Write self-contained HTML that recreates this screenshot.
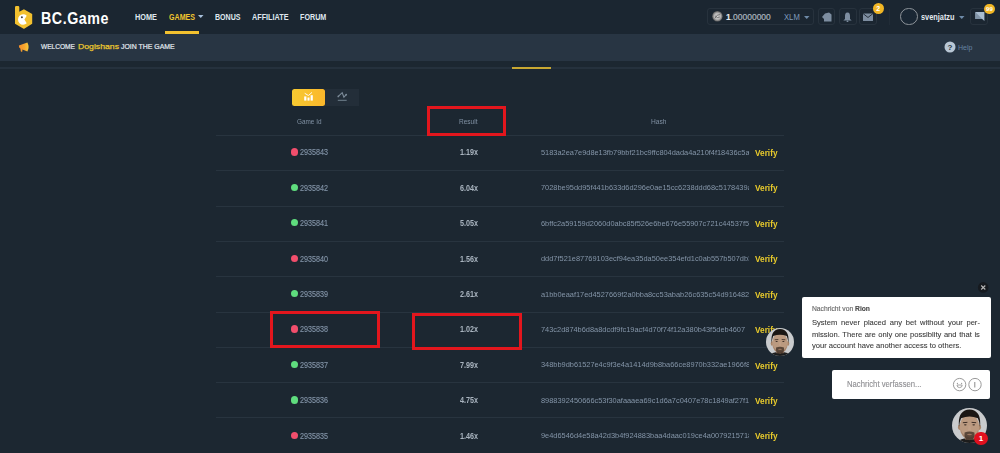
<!DOCTYPE html>
<html><head><meta charset="utf-8">
<style>
*{margin:0;padding:0;box-sizing:border-box}
html,body{width:1000px;height:453px;overflow:hidden;background:#1c2731;font-family:"Liberation Sans",sans-serif}
.a{position:absolute}
.tx{white-space:nowrap}
#hdr{left:0;top:0;width:1000px;height:34px;background:#1b2631}
#wel{left:0;top:34px;width:1000px;height:27px;background:#283543}
#tabline{left:0;top:67px;width:1000px;height:2px;background:#25313d}
#tabsel{left:512.4px;top:67px;width:38.6px;height:2px;background:#c9a832}
.ul{left:165px;top:31px;width:34px;height:3px;background:#f3c12f}
.btn{top:8.2px;height:17.3px;border:1px solid #27323d;border-radius:3px}
.badge{width:11px;height:11px;border-radius:50%;background:#f1b624;color:#fff;font-size:7px;font-weight:bold;text-align:center;line-height:11px}
.hl{left:216px;width:568px;height:1px;background:#28343f}
.dot{width:7px;height:7px;border-radius:50%}
.hashw{left:541px;width:207.5px;overflow:hidden}
.rbox{border:3px solid #e3161d}
.chatbox{background:#fff;border-radius:2px}

</style></head><body><div id="wrap" style="position:absolute;left:0;top:0;width:1000px;height:453px;filter:blur(0.3px)">
<div id="hdr" class="a"></div>
<div id="wel" class="a"></div>
<div id="tabline" class="a"></div>
<div id="tabsel" class="a"></div>
<svg class="a" style="left:10px;top:3px" width="30" height="30" viewBox="0 0 30 30">
<path d="M5 4.2 Q5 3 6.2 3 L8.1 3 Q9.3 3 9.3 4.2 L9.3 8.8 L13.9 6.3 L22.2 11 L22.2 20.8 L14.6 25.5 Q13.9 25.9 13.2 25.5 L5 20.8 Z" fill="#f3c12f"/>
<path d="M14.4 16.5 L16.75 12.7 A5.2 5.2 0 1 0 16.75 20.3 Z" fill="#fff"/>
<circle cx="11.9" cy="14.3" r="0.95" fill="#3a3a3a"/>
</svg>
<svg class="a" style="left:198px;top:15.4px" width="6" height="4"><path d="M0 0 L5.5 0 L2.75 3Z" fill="#a8c0dc"/></svg>
<div class="a ul"></div>
<!-- right -->
<div class="a btn" style="left:707.2px;width:107.3px"></div>
<svg class="a" style="left:712px;top:11px" width="11" height="11" viewBox="0 0 11 11"><defs><radialGradient id="cg"><stop offset="0" stop-color="#d8d8d8"/><stop offset="0.6" stop-color="#b5b5b5"/><stop offset="1" stop-color="#5d5d5d"/></radialGradient></defs><circle cx="5.4" cy="5.3" r="5.2" fill="url(#cg)"/><path d="M3 7.2 Q5 3 8 3.6 M3.2 5 Q5.5 7.5 7.8 6" stroke="#6a6a6a" stroke-width="0.9" fill="none"/></svg>
<svg class="a" style="left:803.5px;top:15.5px" width="6" height="4"><path d="M0 0 L5.5 0 L2.75 3Z" fill="#6e8aa8"/></svg>
<div class="a btn" style="left:818.2px;width:16.8px"></div>
<div class="a btn" style="left:838.6px;width:18px"></div>
<div class="a btn" style="left:859.4px;width:17.6px"></div>
<svg class="a" style="left:821px;top:12px" width="11" height="10" viewBox="0 0 11 10"><path d="M1 5 L4 1.5 L8 0.5 L10.5 2.5 L10.5 9.5 L3 9.5 L3 7 Z" fill="#7d8da0"/></svg>
<svg class="a" style="left:843px;top:11.8px" width="9" height="10.5" viewBox="0 0 9 10.5"><path d="M4.5 0.5 C2.3 0.5 2 2.5 2 4.5 L2 7 L0.3 8.5 L8.7 8.5 L7 7 L7 4.5 C7 2.5 6.7 0.5 4.5 0.5Z" fill="#7d8da0"/><circle cx="4.5" cy="9.5" r="0.9" fill="#7d8da0"/></svg>
<svg class="a" style="left:863px;top:13px" width="10" height="8" viewBox="0 0 10 8"><rect x="0" y="0.5" width="10" height="7.5" rx="0.5" fill="#7d8da0"/><path d="M0 0.5 L5 4.5 L10 0.5" stroke="#1b2530" stroke-width="0.9" fill="none"/></svg>
<div class="a badge" style="left:872.7px;top:3.1px">2</div>
<div class="a" style="left:889px;top:9px;width:1px;height:16px;background:#212c37"></div>
<div class="a" style="left:900.2px;top:7.8px;width:17.6px;height:17.6px;border-radius:50%;border:1px solid #8f959b;background:#1a2734"></div>
<svg class="a" style="left:959px;top:15.6px" width="6" height="4"><path d="M0 0 L5.5 0 L2.75 3Z" fill="#6e8aa8"/></svg>
<div class="a btn" style="left:970.4px;width:18.1px"></div>
<svg class="a" style="left:974.8px;top:12.2px" width="10" height="10" viewBox="0 0 10 10"><path d="M0.4 0.1 L9.4 0.1 L9.4 9 L7.2 7 L0.4 7Z" fill="#a9bccf"/><path d="M0.4 0.1 L0.4 7 L7.2 7Z" fill="#8194a8"/></svg>
<div class="a badge" style="left:984.2px;top:3.5px;width:10.5px;height:10.5px;line-height:10.5px;font-size:6px">99</div>
<!-- welcome -->
<svg class="a" style="left:12px;top:37px" width="24" height="20" viewBox="0 0 24 20"><defs><linearGradient id="mg" x1="0" x2="1" y1="0" y2="0"><stop offset="0" stop-color="#f58e2a"/><stop offset="0.55" stop-color="#f7a52f"/><stop offset="1" stop-color="#f9cb3b"/></linearGradient></defs><path d="M6.9 8.6 Q6.7 10.9 8.3 11.6 L8.9 14.4 Q9.4 15 10.3 14.5 L10.4 12.4 L15.4 14.6 Q17.8 10 15.4 5.4 Z" fill="url(#mg)"/></svg>
<svg class="a" style="left:943.5px;top:41px" width="12" height="12" viewBox="0 0 12 12"><circle cx="6" cy="6" r="5.5" fill="#b9c7d5"/><text x="6" y="8.9" font-size="8" font-weight="bold" text-anchor="middle" fill="#283441" font-family="Liberation Sans">?</text></svg>
<!-- toggle -->
<div class="a" style="left:292.2px;top:88.5px;width:33.2px;height:17.1px;border-radius:2.5px;background:linear-gradient(90deg,#f7ca31,#fbb72b)"></div>
<div class="a" style="left:325.4px;top:88.5px;width:33.6px;height:17.1px;background:#232e39"></div>
<svg class="a" style="left:298px;top:86px" width="56" height="22" viewBox="0 0 56 22">
<rect x="6.2" y="10.4" width="2.2" height="4.2" fill="#fff"/><rect x="9.5" y="11.5" width="2" height="3.1" fill="#fff"/><rect x="12.6" y="9.2" width="2.2" height="5.4" fill="#fff"/>
<path d="M6.7 7.3 L10.4 9.5 L14 6.4" stroke="#fff" stroke-width="0.9" fill="none"/>
<path d="M40.3 10.4 L44.2 6.7 L45.9 11.2 L48.2 8.7" stroke="#7c8b99" stroke-width="1.1" fill="none"/>
<circle cx="40.3" cy="10.4" r="0.9" fill="#7c8b99"/><circle cx="48.2" cy="8.7" r="0.9" fill="#7c8b99"/>
<path d="M39.8 14.3 L48.7 14.3" stroke="#7c8b99" stroke-width="0.9"/>
</svg>

<div class="a hl" style="top:135.0px"></div>
<div class="a dot" style="left:290.6px;top:148.3px;width:7.4px;height:7.4px;background:#f14e6c"></div>
<div class="a hashw" style="top:146.7px;height:12px"><span class="a" style="left:0;top:2.23px;font-size:8px;line-height:8px;color:#8495a8;white-space:nowrap;transform:scaleX(0.925);transform-origin:0 0">5183a2ea7e9d8e13fb79bbf21bc9ffc804dada4a210f4f18436c5a9</span></div>
<div class="a hl" style="top:170.0px"></div>
<div class="a dot" style="left:290.6px;top:183.7px;width:7.4px;height:7.4px;background:#5fdd7e"></div>
<div class="a hashw" style="top:182.1px;height:12px"><span class="a" style="left:0;top:2.23px;font-size:8px;line-height:8px;color:#8495a8;white-space:nowrap;transform:scaleX(0.925);transform-origin:0 0">7028be95dd95f441b633d6d296e0ae15cc6238ddd68c5178439a1</span></div>
<div class="a hl" style="top:206.0px"></div>
<div class="a dot" style="left:290.6px;top:219.1px;width:7.4px;height:7.4px;background:#5fdd7e"></div>
<div class="a hashw" style="top:217.5px;height:12px"><span class="a" style="left:0;top:2.23px;font-size:8px;line-height:8px;color:#8495a8;white-space:nowrap;transform:scaleX(0.925);transform-origin:0 0">6bffc2a59159d2060d0abc85f526e6be676e55907c721c44537f5e</span></div>
<div class="a hl" style="top:241.0px"></div>
<div class="a dot" style="left:290.6px;top:254.5px;width:7.4px;height:7.4px;background:#f14e6c"></div>
<div class="a hashw" style="top:252.9px;height:12px"><span class="a" style="left:0;top:2.23px;font-size:8px;line-height:8px;color:#8495a8;white-space:nowrap;transform:scaleX(0.925);transform-origin:0 0">ddd7f521e87769103ecf94ea35da50ee354efd1c0ab557b507db3</span></div>
<div class="a hl" style="top:276.0px"></div>
<div class="a dot" style="left:290.6px;top:289.9px;width:7.4px;height:7.4px;background:#5fdd7e"></div>
<div class="a hashw" style="top:288.3px;height:12px"><span class="a" style="left:0;top:2.23px;font-size:8px;line-height:8px;color:#8495a8;white-space:nowrap;transform:scaleX(0.925);transform-origin:0 0">a1bb0eaaf17ed4527669f2a0bba8cc53abab26c635c54d916482</span></div>
<div class="a hl" style="top:312.0px"></div>
<div class="a dot" style="left:290.6px;top:325.3px;width:7.4px;height:7.4px;background:#f14e6c"></div>
<div class="a hashw" style="top:323.8px;height:12px"><span class="a" style="left:0;top:2.23px;font-size:8px;line-height:8px;color:#8495a8;white-space:nowrap;transform:scaleX(0.925);transform-origin:0 0">743c2d874b6d8a8dcdf9fc19acf4d70f74f12a380b43f5deb4607</span></div>
<div class="a hl" style="top:347.0px"></div>
<div class="a dot" style="left:290.6px;top:360.8px;width:7.4px;height:7.4px;background:#5fdd7e"></div>
<div class="a hashw" style="top:359.2px;height:12px"><span class="a" style="left:0;top:2.23px;font-size:8px;line-height:8px;color:#8495a8;white-space:nowrap;transform:scaleX(0.925);transform-origin:0 0">348bb9db61527e4c9f3e4a1414d9b8ba66ce8970b332ae1966f8e</span></div>
<div class="a hl" style="top:382.0px"></div>
<div class="a dot" style="left:290.6px;top:396.2px;width:7.4px;height:7.4px;background:#5fdd7e"></div>
<div class="a hashw" style="top:394.6px;height:12px"><span class="a" style="left:0;top:2.23px;font-size:8px;line-height:8px;color:#8495a8;white-space:nowrap;transform:scaleX(0.925);transform-origin:0 0">8988392450666c53f30afaaaea69c1d6a7c0407e78c1849af27f1a</span></div>
<div class="a hl" style="top:417.0px"></div>
<div class="a dot" style="left:290.6px;top:431.6px;width:7.4px;height:7.4px;background:#f14e6c"></div>
<div class="a hashw" style="top:430.0px;height:12px"><span class="a" style="left:0;top:2.23px;font-size:8px;line-height:8px;color:#8495a8;white-space:nowrap;transform:scaleX(0.925);transform-origin:0 0">9e4d6546d4e58a42d3b4f924883baa4daac019ce4a0079215718c</span></div>
<svg class="a" style="left:977px;top:281px" width="13" height="13" viewBox="0 0 13 13"><circle cx="6.2" cy="6.4" r="5.3" fill="#161a1f"/><path d="M4.2 4.5 L8.3 8.5 M8.3 4.5 L4.2 8.5" stroke="#b5b5b5" stroke-width="1.1"/></svg>
<div class="a chatbox" style="left:801.5px;top:296.9px;width:189px;height:61px"></div>
<div class="a chatbox" style="left:831.7px;top:369.9px;width:158.7px;height:29.5px"></div>
<svg class="a" style="left:950px;top:375px" width="36" height="20" viewBox="0 0 36 20">
<circle cx="9.6" cy="9.6" r="6.2" fill="none" stroke="#9a9a9a" stroke-width="1"/>
<circle cx="7.4" cy="8.4" r="0.6" fill="#9a9a9a"/><circle cx="11.6" cy="8.4" r="0.6" fill="#9a9a9a"/>
<path d="M7 10 L12.2 10 A2.6 2.6 0 0 1 7 10Z" fill="none" stroke="#9a9a9a" stroke-width="0.9"/>
<circle cx="25" cy="9.6" r="6.2" fill="none" stroke="#9a9a9a" stroke-width="1"/>
<path d="M24.8 7 L24.8 12.5" stroke="#8a8a8a" stroke-width="1"/>
</svg>
<div class="a" style="left:811.9px;top:317.3px;width:168.1px;font-size:7.6px;line-height:11.2px;color:#383838;-webkit-text-stroke:0.08px #383838">
<div style="text-align:justify;text-align-last:justify;white-space:nowrap;display:flex;justify-content:space-between"><span>System</span><span>never</span><span>placed</span><span>any</span><span>bet</span><span>without</span><span>your</span><span>per-</span></div>
<div style="display:flex;justify-content:space-between;white-space:nowrap"><span>mission.</span><span>There</span><span>are</span><span>only</span><span>one</span><span>possiblity</span><span>and</span><span>that</span><span>is</span></div>
<div style="white-space:nowrap">your account have another access to others.</div>
</div>

<div id="t0" class="a tx" style="left:40.5px;top:10.73px;font-size:15.8px;line-height:15.8px;font-weight:bold;color:#fff;letter-spacing:0.6px;transform:scaleX(0.9029);transform-origin:0 0">BC.Game</div>
<div id="t1" class="a tx" style="left:135px;top:13.00px;font-size:8.5px;line-height:8.5px;font-weight:bold;color:#dfe6ee;transform:scaleX(0.8627);transform-origin:0 0">HOME</div>
<div id="t2" class="a tx" style="left:169px;top:13.00px;font-size:8.5px;line-height:8.5px;font-weight:bold;color:#f0c52f;transform:scaleX(0.8341);transform-origin:0 0">GAMES</div>
<div id="t3" class="a tx" style="left:215px;top:13.00px;font-size:8.5px;line-height:8.5px;font-weight:bold;color:#dfe6ee;transform:scaleX(0.8305);transform-origin:0 0">BONUS</div>
<div id="t4" class="a tx" style="left:252px;top:13.00px;font-size:8.5px;line-height:8.5px;font-weight:bold;color:#dfe6ee;transform:scaleX(0.8526);transform-origin:0 0">AFFILIATE</div>
<div id="t5" class="a tx" style="left:300px;top:13.00px;font-size:8.5px;line-height:8.5px;font-weight:bold;color:#dfe6ee;transform:scaleX(0.8437);transform-origin:0 0">FORUM</div>
<div id="t6" class="a tx" style="left:725.8px;top:13.00px;font-size:8.5px;line-height:8.5px;color:#aab4be;-webkit-text-stroke:0.2px #aab4be;transform:scaleX(0.9973);transform-origin:0 0"><b style="color:#eef2f6">1</b>.00000000</div>
<div id="t7" class="a tx" style="left:784px;top:13.00px;font-size:8.5px;line-height:8.5px;color:#7f9bba;transform:scaleX(0.9037);transform-origin:0 0">XLM</div>
<div id="t8" class="a tx" style="left:920.5px;top:13.10px;font-size:8.5px;line-height:8.5px;font-weight:bold;color:#e3e9ef;transform:scaleX(0.8645);transform-origin:0 0">svenjatzu</div>
<div id="t9" class="a tx" style="left:41px;top:43.45px;font-size:7.5px;line-height:7.5px;color:#e3e9ef;-webkit-text-stroke:0.2px #e3e9ef;transform:scaleX(0.8771);transform-origin:0 0">WELCOME</div>
<div id="t10" class="a tx" style="left:77.7px;top:43.20px;font-size:7.8px;line-height:7.8px;color:#eac52f;-webkit-text-stroke:0.25px #eac52f;transform:scaleX(1.1128);transform-origin:0 0">Dogishans</div>
<div id="t11" class="a tx" style="left:120.8px;top:43.45px;font-size:7.5px;line-height:7.5px;color:#e3e9ef;-webkit-text-stroke:0.2px #e3e9ef;transform:scaleX(0.9226);transform-origin:0 0">JOIN THE GAME</div>
<div id="t12" class="a tx" style="left:958px;top:43.73px;font-size:8px;line-height:8px;color:#6583a2;transform:scaleX(0.8813);transform-origin:0 0">Help</div>
<div id="t13" class="a tx" style="left:297px;top:118.47px;font-size:7px;line-height:7px;color:#8091a3;transform:scaleX(0.9122);transform-origin:0 0">Game Id</div>
<div id="t14" class="a tx" style="left:459px;top:118.47px;font-size:7px;line-height:7px;color:#8091a3;transform:scaleX(0.9323);transform-origin:0 0">Result</div>
<div id="t15" class="a tx" style="left:651px;top:118.47px;font-size:7px;line-height:7px;color:#8091a3;transform:scaleX(0.9484);transform-origin:0 0">Hash</div>
<div id="t16" class="a tx" style="left:299.7px;top:148.34px;font-size:8.7px;line-height:8.7px;color:#8092a5;-webkit-text-stroke:0.15px #8092a5;transform:scaleX(0.8277);transform-origin:0 0">2935843</div>
<div id="t17" class="a tx" style="left:459.9px;top:148.34px;font-size:8.7px;line-height:8.7px;font-weight:bold;color:#a9b4bf;transform:scaleX(0.8276);transform-origin:0 0">1.19x</div>
<div id="t18" class="a tx" style="left:754.9px;top:149.08px;font-size:9px;line-height:9px;font-weight:bold;color:#e9cb2c;transform:scaleX(0.9172);transform-origin:0 0">Verify</div>
<div id="t19" class="a tx" style="left:299.7px;top:183.75px;font-size:8.7px;line-height:8.7px;color:#8092a5;-webkit-text-stroke:0.15px #8092a5;transform:scaleX(0.8277);transform-origin:0 0">2935842</div>
<div id="t20" class="a tx" style="left:459.9px;top:183.75px;font-size:8.7px;line-height:8.7px;font-weight:bold;color:#a9b4bf;transform:scaleX(0.8276);transform-origin:0 0">6.04x</div>
<div id="t21" class="a tx" style="left:754.9px;top:184.49px;font-size:9px;line-height:9px;font-weight:bold;color:#e9cb2c;transform:scaleX(0.9172);transform-origin:0 0">Verify</div>
<div id="t22" class="a tx" style="left:299.7px;top:219.16px;font-size:8.7px;line-height:8.7px;color:#8092a5;-webkit-text-stroke:0.15px #8092a5;transform:scaleX(0.8277);transform-origin:0 0">2935841</div>
<div id="t23" class="a tx" style="left:459.9px;top:219.16px;font-size:8.7px;line-height:8.7px;font-weight:bold;color:#a9b4bf;transform:scaleX(0.8276);transform-origin:0 0">5.05x</div>
<div id="t24" class="a tx" style="left:754.9px;top:219.90px;font-size:9px;line-height:9px;font-weight:bold;color:#e9cb2c;transform:scaleX(0.9172);transform-origin:0 0">Verify</div>
<div id="t25" class="a tx" style="left:299.7px;top:254.57px;font-size:8.7px;line-height:8.7px;color:#8092a5;-webkit-text-stroke:0.15px #8092a5;transform:scaleX(0.8277);transform-origin:0 0">2935840</div>
<div id="t26" class="a tx" style="left:459.9px;top:254.57px;font-size:8.7px;line-height:8.7px;font-weight:bold;color:#a9b4bf;transform:scaleX(0.8276);transform-origin:0 0">1.56x</div>
<div id="t27" class="a tx" style="left:754.9px;top:255.31px;font-size:9px;line-height:9px;font-weight:bold;color:#e9cb2c;transform:scaleX(0.9172);transform-origin:0 0">Verify</div>
<div id="t28" class="a tx" style="left:299.7px;top:289.98px;font-size:8.7px;line-height:8.7px;color:#8092a5;-webkit-text-stroke:0.15px #8092a5;transform:scaleX(0.8277);transform-origin:0 0">2935839</div>
<div id="t29" class="a tx" style="left:459.9px;top:289.98px;font-size:8.7px;line-height:8.7px;font-weight:bold;color:#a9b4bf;transform:scaleX(0.8276);transform-origin:0 0">2.61x</div>
<div id="t30" class="a tx" style="left:754.9px;top:290.72px;font-size:9px;line-height:9px;font-weight:bold;color:#e9cb2c;transform:scaleX(0.9172);transform-origin:0 0">Verify</div>
<div id="t31" class="a tx" style="left:299.7px;top:325.39px;font-size:8.7px;line-height:8.7px;color:#8092a5;-webkit-text-stroke:0.15px #8092a5;transform:scaleX(0.8277);transform-origin:0 0">2935838</div>
<div id="t32" class="a tx" style="left:459.9px;top:325.39px;font-size:8.7px;line-height:8.7px;font-weight:bold;color:#a9b4bf;transform:scaleX(0.8276);transform-origin:0 0">1.02x</div>
<div id="t33" class="a tx" style="left:754.9px;top:326.13px;font-size:9px;line-height:9px;font-weight:bold;color:#e9cb2c;transform:scaleX(0.9172);transform-origin:0 0">Verify</div>
<div id="t34" class="a tx" style="left:299.7px;top:360.80px;font-size:8.7px;line-height:8.7px;color:#8092a5;-webkit-text-stroke:0.15px #8092a5;transform:scaleX(0.8277);transform-origin:0 0">2935837</div>
<div id="t35" class="a tx" style="left:459.9px;top:360.80px;font-size:8.7px;line-height:8.7px;font-weight:bold;color:#a9b4bf;transform:scaleX(0.8276);transform-origin:0 0">7.99x</div>
<div id="t36" class="a tx" style="left:754.9px;top:361.54px;font-size:9px;line-height:9px;font-weight:bold;color:#e9cb2c;transform:scaleX(0.9172);transform-origin:0 0">Verify</div>
<div id="t37" class="a tx" style="left:299.7px;top:396.21px;font-size:8.7px;line-height:8.7px;color:#8092a5;-webkit-text-stroke:0.15px #8092a5;transform:scaleX(0.8277);transform-origin:0 0">2935836</div>
<div id="t38" class="a tx" style="left:459.9px;top:396.21px;font-size:8.7px;line-height:8.7px;font-weight:bold;color:#a9b4bf;transform:scaleX(0.8276);transform-origin:0 0">4.75x</div>
<div id="t39" class="a tx" style="left:754.9px;top:396.95px;font-size:9px;line-height:9px;font-weight:bold;color:#e9cb2c;transform:scaleX(0.9172);transform-origin:0 0">Verify</div>
<div id="t40" class="a tx" style="left:299.7px;top:431.62px;font-size:8.7px;line-height:8.7px;color:#8092a5;-webkit-text-stroke:0.15px #8092a5;transform:scaleX(0.8277);transform-origin:0 0">2935835</div>
<div id="t41" class="a tx" style="left:459.9px;top:431.62px;font-size:8.7px;line-height:8.7px;font-weight:bold;color:#a9b4bf;transform:scaleX(0.8276);transform-origin:0 0">1.46x</div>
<div id="t42" class="a tx" style="left:754.9px;top:432.36px;font-size:9px;line-height:9px;font-weight:bold;color:#e9cb2c;transform:scaleX(0.9172);transform-origin:0 0">Verify</div>
<div id="t43" class="a tx" style="left:811.9px;top:305.70px;font-size:6.5px;line-height:6.5px;color:#6a6a6a;-webkit-text-stroke:0.15px #6a6a6a;transform:scaleX(1.0357);transform-origin:0 0">Nachricht von <b style="color:#444">Rion</b></div>
<div id="t44" class="a tx" style="left:846.7px;top:379.75px;font-size:8.8px;line-height:8.8px;color:#8c8c90;-webkit-text-stroke:0.1px #8c8c90;transform:scaleX(0.8757);transform-origin:0 0">Nachricht verfassen...</div>
<div class="a rbox" style="left:427px;top:106px;width:79px;height:30px"></div>
<div class="a rbox" style="left:270px;top:311px;width:110px;height:37px"></div>
<div class="a rbox" style="left:412px;top:313px;width:110px;height:37px"></div>
<svg class="a" style="left:765.5px;top:328.2px" width="28" height="28" viewBox="0 0 100 100"><use href="#av"/></svg>
<svg class="a" style="left:952.4px;top:407.9px" width="35" height="35" viewBox="0 0 100 100">
<defs><g id="av"><clipPath id="cc"><circle cx="50" cy="50" r="50"/></clipPath>
<g clip-path="url(#cc)"><rect width="100" height="100" fill="#c9cbcd"/>
<path d="M12 100 Q18 90 35 87 L65 87 Q82 90 88 100Z" fill="#1c1c1c"/>
<rect x="37" y="76" width="26" height="14" fill="#8f6f58"/>
<ellipse cx="21.5" cy="55" rx="4.5" ry="8" fill="#a88569"/><ellipse cx="78.5" cy="55" rx="4.5" ry="8" fill="#a88569"/>
<ellipse cx="50" cy="54" rx="28" ry="36" fill="#bb9a80"/>
<path d="M24 58 Q27 87 50 92 Q73 87 76 58 Q72 80 50 84 Q28 80 24 58Z" fill="#7a5c4a" opacity=".45"/>
<path d="M36 70 Q50 64 64 70 Q66 84 59 89 Q50 93 41 89 Q34 84 36 70Z" fill="#3a2b22" opacity=".75"/>
<ellipse cx="50" cy="76" rx="7" ry="2.2" fill="#9b7560"/>
<path d="M20 54 Q15 6 50 4 Q85 6 80 54 Q78 37 74 29 Q50 20 26 29 Q22 37 20 54Z" fill="#1b1714"/>
<path d="M31 42 L44 41 M56 41 L69 42" stroke="#2a1f19" stroke-width="2.5"/>
<ellipse cx="38" cy="48" rx="4" ry="1.8" fill="#3a2c24"/><ellipse cx="62" cy="48" rx="4" ry="1.8" fill="#3a2c24"/>
<path d="M47 50 L46 63 Q50 66 54 63 L53 50Z" fill="#c4a48a" opacity=".6"/>
</g></g></defs><use href="#av"/></svg>
<div class="a" style="left:974.2px;top:431.7px;width:13.6px;height:13.6px;border-radius:50%;background:#e0101e;color:#fff;font-size:8px;font-weight:bold;text-align:center;line-height:13.6px;font-family:'Liberation Sans'">1</div>

</div></body></html>
